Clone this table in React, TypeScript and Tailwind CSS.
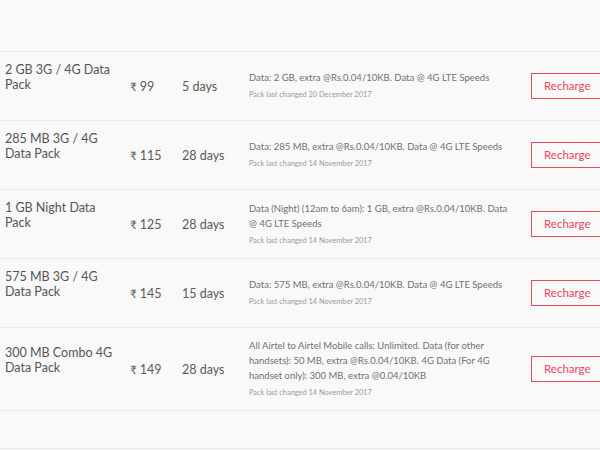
const packs = [
  {
    name: '2 GB 3G / 4G Data Pack',
    price: '99',
    validity: '5 days',
    details: 'Data: 2 GB, extra @Rs.0.04/10KB. Data @ 4G LTE Speeds',
    changed: '20 December 2017',
  },
  {
    name: '285 MB 3G / 4G Data Pack',
    price: '115',
    validity: '28 days',
    details: 'Data: 285 MB, extra @Rs.0.04/10KB. Data @ 4G LTE Speeds',
    changed: '14 November 2017',
  },
  {
    name: '1 GB Night Data Pack',
    price: '125',
    validity: '28 days',
    details: 'Data (Night) (12am to 6am): 1 GB, extra @Rs.0.04/10KB. Data @ 4G LTE Speeds',
    changed: '14 November 2017',
  },
  {
    name: '575 MB 3G / 4G Data Pack',
    price: '145',
    validity: '15 days',
    details: 'Data: 575 MB, extra @Rs.0.04/10KB. Data @ 4G LTE Speeds',
    changed: '14 November 2017',
  },
  {
    name: '300 MB Combo 4G Data Pack',
    price: '149',
    validity: '28 days',
    details:
      'All Airtel to Airtel Mobile calls: Unlimited. Data (for other handsets): 50 MB, extra @Rs.0.04/10KB. 4G Data (For 4G handset only): 300 MB, extra @0.04/10KB',
    changed: '14 November 2017',
  },
]

export default function App() {
  return (
    <div
      className="w-[600px] h-[450px] overflow-hidden bg-[#f9f9f9] text-[#555]"
      style={{ fontFamily: 'Lato, "DejaVu Sans", sans-serif' }}
    >
      <div className="h-[52px] border-b border-[#ebebeb]" />
      {packs.map((p) => (
        <div
          key={p.name}
          className="flex items-center min-h-[69px] py-[10px] border-b border-[#ebebeb]"
        >
          <div className="shrink-0 w-[130px] pl-[5px] pr-[17px] pb-[18px] text-[12.5px] leading-[15px] text-[#555]">
            {p.name}
          </div>
          <div className="shrink-0 w-[52px] text-[12.5px] leading-[15px] text-[#5a5a5a]">
            <span className="text-[11.5px]">₹</span> {p.price}
          </div>
          <div className="shrink-0 w-[67px] text-[12.5px] leading-[15px] text-[#5a5a5a]">{p.validity}</div>
          <div className="shrink-0 w-[282px] pr-[18px]">
            <div className="text-[9.5px] leading-[15px] text-[#707070]">{p.details}</div>
            <div className="mt-[2px] text-[7.4px] leading-[15px] text-[#9a9a9a]">
              Pack last changed {p.changed}
            </div>
          </div>
          <div className="shrink-0 w-[100px] h-[26px] border border-[#e8475a] text-[#e8475a] text-[11.5px] pl-[12px] flex items-center">
            Recharge
          </div>
        </div>
      ))}
      <div className="h-[38px] border-b border-[#ebebeb]" />
    </div>
  )
}
